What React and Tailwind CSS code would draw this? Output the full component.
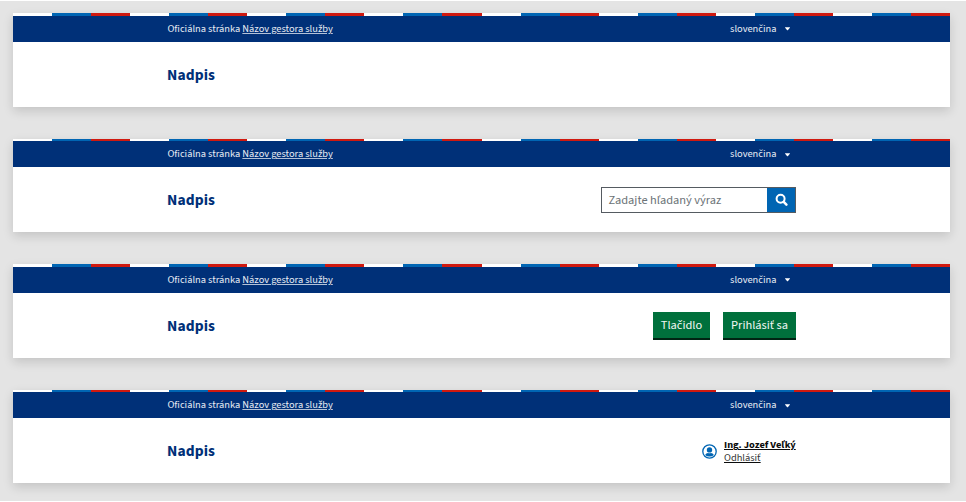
const STRIPES = Array.from({ length: 8 });

function Header({ children }) {
  return (
    <header className="h-[93.4px] bg-white shadow-[0_4px_10px_rgba(0,0,0,0.14)]">
      <div className="flex h-[2.4px]">
        {STRIPES.map((_, i) => (
          <div key={i} className="flex flex-1">
            <span className="flex-1 bg-white" />
            <span className="flex-1 bg-[#0065b3]" />
            <span className="flex-1 bg-[#d0190f]" />
          </div>
        ))}
      </div>
      <div className="flex h-[26px] items-center justify-between bg-[#003078] pl-[154.4px] pr-[160px] pt-[0.6px] text-[10.4px] leading-none text-[#e9edf4]">
        <div className="whitespace-nowrap">
          Oficiálna stránka <a className="underline decoration-[#b3c1d7] underline-offset-1">Názov gestora služby</a>
        </div>
        <div className="flex items-center gap-[8.5px] whitespace-nowrap">
          slovenčina
          <svg width="5" height="4" viewBox="0 0 5 4" fill="white">
            <path d="M.2.3h4.6q.3.2.1.5L2.8 3.2q-.3.3-.6 0L.1.8Q-.1.5.2.3z" />
          </svg>
        </div>
      </div>
      <div className="flex h-[65px] items-center justify-between pl-[154px] pr-[154px]">
        <h1 className="pt-[2.4px] text-[15.5px] font-bold leading-none tracking-[0.1px] text-[#003078]">Nadpis</h1>
        {children}
      </div>
    </header>
  );
}

function Search() {
  return (
    <div className="flex h-[26px] w-[195.5px] border border-[#555b61] bg-white">
      <div className="flex flex-1 items-center whitespace-nowrap pl-[7px] text-[12.4px] leading-none text-[#6b7276]">
        Zadajte hľadaný výraz
      </div>
      <button className="flex w-[28px] items-center justify-center bg-[#0065b3] text-white">
        <svg width="13" height="13" viewBox="0 0 13 13" fill="none" stroke="currentColor">
          <circle cx="5.6" cy="5.8" r="4" strokeWidth="2" />
          <path d="M8.7 8.9l2.7 2.7" strokeWidth="2.5" strokeLinecap="round" />
        </svg>
      </button>
    </div>
  );
}

function Button({ children, className }) {
  return (
    <button className={`flex h-[28px] items-center justify-center whitespace-nowrap border-b-2 border-[#002413] bg-[#00703c] pt-[1.5px] text-[12.4px] leading-none text-[#f0f6f3] ${className}`}>
      {children}
    </button>
  );
}

function User() {
  return (
    <div className="flex items-center gap-[7px] pt-[0.6px]">
      <svg width="15" height="15" viewBox="0 0 15 15">
        <circle cx="7.5" cy="7.5" r="6.7" fill="white" stroke="#0065b3" strokeWidth="1.3" />
        <circle cx="7.5" cy="5.9" r="2.7" fill="#0065b3" />
        <path d="M3.1 10.9Q4.2 8.9 6 8.9Q7.5 9.7 9 8.9Q10.8 8.9 11.9 10.9Q10.2 12.5 7.5 12.5T3.1 10.9z" fill="#0065b3" />
      </svg>
      <div className="w-[72px] whitespace-nowrap pt-[1.4px] text-[10.4px] leading-[12.5px] text-[#0b0c0c] underline underline-offset-1">
        <div className="font-bold">Ing. Jozef Veľký</div>
        <div className="text-[#333535]">Odhlásiť</div>
      </div>
    </div>
  );
}

export default function App() {
  return (
    <div className="h-[502px] overflow-hidden bg-white py-px font-['Source_Sans_Pro','Source_Sans_3','Noto_Sans_CJK_SC','Noto_Sans',sans-serif]">
      <div className="flex h-[500px] flex-col gap-[32.15px] bg-[#e4e4e4] pl-[13px] pr-[16px] pt-[12.4px]">
        <Header />
        <Header>
          <Search />
        </Header>
        <Header>
          <div className="flex gap-[13px] pt-[0.6px]">
            <Button className="w-[57px]">Tlačidlo</Button>
            <Button className="w-[73px]">Prihlásiť sa</Button>
          </div>
        </Header>
        <Header>
          <User />
        </Header>
      </div>
    </div>
  );
}
